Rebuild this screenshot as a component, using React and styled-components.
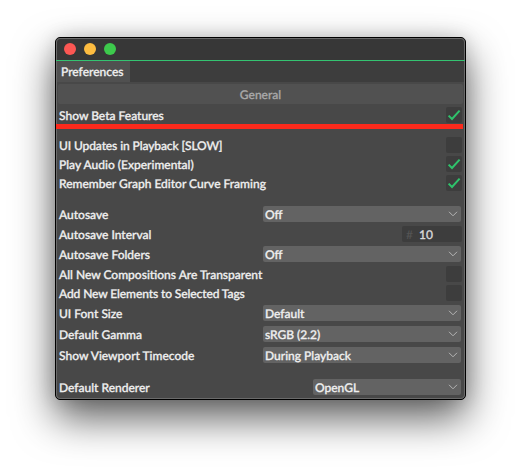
import React from "react";
import styled, { createGlobalStyle } from "styled-components";

const GlobalStyle = createGlobalStyle`
  * { box-sizing: border-box; }
  body {
    margin: 0;
    background: #fff;
    font-family: Lato, "Open Sans", sans-serif;
    font-size: 12px;
    font-weight: 500;
    text-rendering: geometricPrecision;
    overflow: hidden;
  }
`;

const Desktop = styled.main`
  width: 521px;
  height: 473px;
  padding: 37px 0 0 55px;
  overflow: hidden;
`;

const Window = styled.section`
  width: 411px;
  height: 363px;
  border: 1px solid #000;
  border-radius: 5px;
  background: #484848;
  color: #f0f0f0;
  overflow: hidden;
  position: relative;
  box-shadow: 0 18px 40px rgba(0, 0, 0, 0.64), 0 0 18px rgba(0, 0, 0, 0.14);
  &::after {
    content: "";
    position: absolute;
    inset: 0;
    border: 1px solid #6a6a6a;
    border-radius: 4px;
    pointer-events: none;
  }
`;

const TitleBar = styled.header`
  display: flex;
  gap: 8px;
  height: 22px;
  padding: 5px 0 0 8px;
  background: #373737;
`;

const AccentLine = styled.div`
  position: relative;
  z-index: 1;
  height: 1px;
  background: #34c371;
`;

const Light = styled.span`
  width: 12px;
  height: 12px;
  border-radius: 50%;
  background: ${(p) => p.$color};
`;

const TabBar = styled.nav`
  display: flex;
  height: 21px;
  background: #3d3d3d;
`;

const Tab = styled.div`
  width: 74px;
  padding: 2px 0 0 5px;
  background: #505050;
`;

const GroupHeader = styled.h1`
  margin: 2px 2px 0;
  height: 20px;
  padding-top: 2px;
  border-radius: 2px;
  background: #515151;
  color: #a9a9a9;
  font-size: 12px;
  font-weight: 500;
  line-height: 17px;
  text-align: center;
`;

const Row = styled.div`
  display: flex;
  justify-content: space-between;
  height: 16px;
  margin-top: ${(p) => p.$gap}px;
  padding: 0 3px;
`;

const Label = styled.span`
  display: inline-block;
  font-size: 12px;
  line-height: 17px;
  letter-spacing: ${(p) => p.$tracking || 0}px;
  white-space: nowrap;
  -webkit-text-stroke: 0.3px currentColor;
`;

const Divider = styled.div`
  position: relative;
  z-index: 1;
  height: 5px;
  margin: 1px 2px 0 0;
  background: #fc2a1c;
`;

const Box = styled.span`
  display: flex;
  width: 16px;
  height: 16px;
  border-radius: 2px;
  background: #3d3d3d;
`;

const Dropdown = styled.div`
  display: flex;
  align-items: center;
  justify-content: space-between;
  width: ${(p) => p.$width}px;
  height: 16px;
  margin-right: 1px;
  padding: 0 3px 0 2px;
  border-radius: 2px;
  background: #636363;
`;

const NumberField = styled.div`
  display: flex;
  gap: 6px;
  width: 60px;
  height: 16px;
  padding-left: 4px;
  border-radius: 2px;
  background: #3d3d3d;
  color: #d8d8d8;
`;

const Hash = styled.span`
  width: 7px;
  color: #555;
  font-size: 12px;
  line-height: 17px;
`;

const Checkbox = ({ checked }) => (
  <Box>
    {checked && (
      <svg width="16" height="16" viewBox="0 0 16 16" fill="none" stroke="#2fc26b" strokeWidth="2">
        <path d="M2.6 8.6 6 12 13.6 3.6" />
      </svg>
    )}
  </Box>
);

const Select = ({ value, width = 198 }) => (
  <Dropdown $width={width}>
    <Label>{value}</Label>
    <svg width="10" height="8" viewBox="0 0 10 8" fill="none" stroke="#b5b5b5">
      <path d="M1 1.8 5 5.8 9 1.8" />
    </svg>
  </Dropdown>
);

const primary = [{ label: "Show Beta Features", gap: 3, control: <Checkbox checked /> }];

const settings = [
  { label: "UI Updates in Playback [SLOW]", gap: 8, tracking: -0.1, control: <Checkbox /> },
  { label: "Play Audio (Experimental)", gap: 3, control: <Checkbox checked /> },
  { label: "Remember Graph Editor Curve Framing", gap: 3, control: <Checkbox checked /> },
  { label: "Autosave", gap: 15, control: <Select value="Off" /> },
  {
    label: "Autosave Interval",
    gap: 4,
    control: (
      <NumberField>
        <Hash>#</Hash>
        <Label>10</Label>
      </NumberField>
    ),
  },
  { label: "Autosave Folders", gap: 4, control: <Select value="Off" /> },
  { label: "All New Compositions Are Transparent", gap: 4, control: <Checkbox /> },
  { label: "Add New Elements to Selected Tags", gap: 3, tracking: -0.1, control: <Checkbox /> },
  { label: "UI Font Size", gap: 4, control: <Select value="Default" /> },
  { label: "Default Gamma", gap: 5, control: <Select value="sRGB (2.2)" /> },
  { label: "Show Viewport Timecode", gap: 5, control: <Select value="During Playback" /> },
  { label: "Default Renderer", gap: 16, control: <Select value="OpenGL" width={148} /> },
];

const Rows = ({ items }) =>
  items.map((item) => (
    <Row key={item.label} $gap={item.gap}>
      <Label $tracking={item.tracking}>{item.label}</Label>
      {item.control}
    </Row>
  ));

export default function App() {
  return (
    <>
      <GlobalStyle />
      <Desktop>
        <Window>
          <TitleBar>
            <Light $color="#fc5753" />
            <Light $color="#fdbc40" />
            <Light $color="#3dc94c" />
          </TitleBar>
          <AccentLine />
          <TabBar>
            <Tab>
              <Label>Preferences</Label>
            </Tab>
          </TabBar>
          <GroupHeader>
            <Label>General</Label>
          </GroupHeader>
          <Rows items={primary} />
          <Divider />
          <Rows items={settings} />
        </Window>
      </Desktop>
    </>
  );
}
